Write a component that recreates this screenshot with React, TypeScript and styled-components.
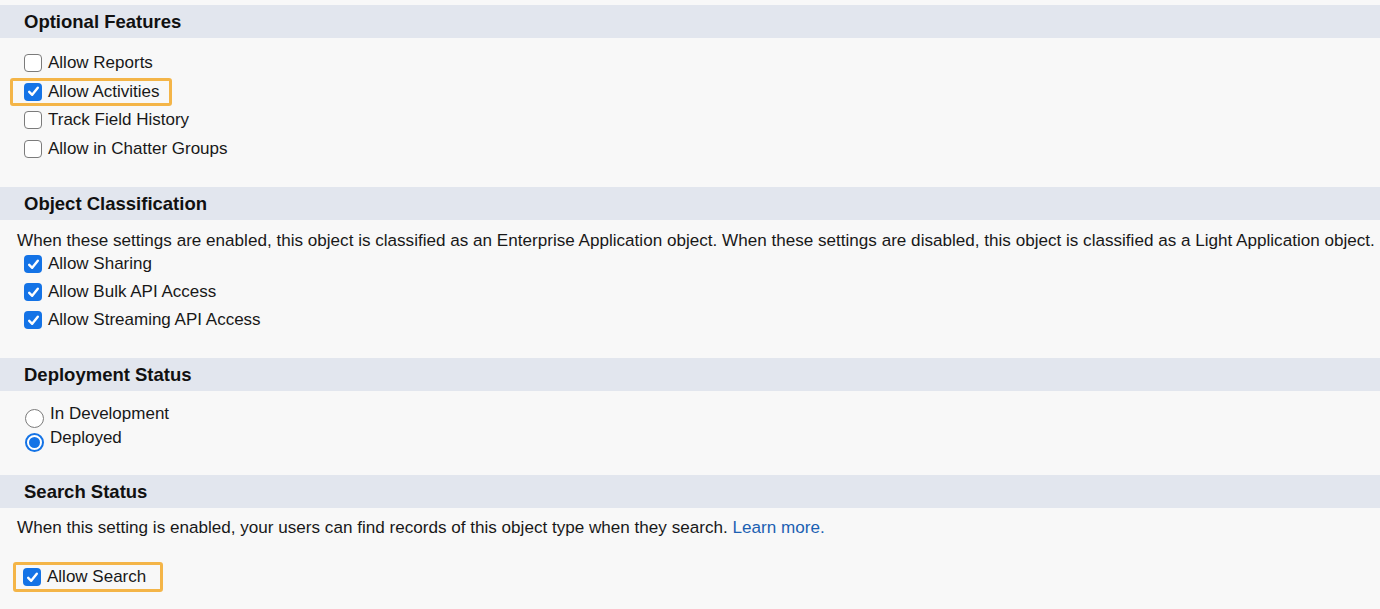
import React from 'react';
import styled, { createGlobalStyle } from 'styled-components';

const GlobalStyle = createGlobalStyle`
  html, body {
    margin: 0;
    padding: 0;
    background: #f8f8f8;
  }
  body {
    font-family: 'Liberation Sans', Arial, sans-serif;
    color: #181818;
  }
`;

const Page = styled.div`
  width: 1380px;
  height: 609px;
  overflow: hidden;
  padding-top: 5px;
  box-sizing: border-box;
  background: #f8f8f8;
`;

const SectionHeader = styled.div`
  height: 33px;
  display: flex;
  align-items: center;
  padding-left: 24px;
  background: #e2e6ee;
  font-size: 18.5px;
  font-weight: 700;
  color: #111;
`;

const SectionBody = styled.div<{ $top: number; $bottom: number; $left?: number }>`
  display: flex;
  flex-direction: column;
  align-items: flex-start;
  padding: ${p => p.$top}px 0 ${p => p.$bottom}px ${p => p.$left ?? 24}px;
`;

const Description = styled.div<{ $offset?: number }>`
  font-size: 17.1px;
  line-height: 18px;
  white-space: nowrap;
  margin-left: ${p => p.$offset ?? -7}px;
`;

const Link = styled.a`
  color: #1b60b2;
  text-decoration: none;
`;

const Row = styled.label<{ $height?: number }>`
  display: flex;
  align-items: center;
  gap: 6px;
  height: ${p => p.$height ?? 28.5}px;
  font-size: 17px;
  cursor: pointer;
`;

const Highlight = styled.div<{ $shift: number; $height: number; $right: number }>`
  display: inline-flex;
  align-items: center;
  box-sizing: border-box;
  height: ${p => p.$height}px;
  margin-left: -${p => p.$shift}px;
  padding: 0 ${p => p.$right}px 0 ${p => p.$shift - 3}px;
  border: 3px solid #f4b548;
  border-radius: 3px;
`;

const Box = styled.span<{ $checked: boolean }>`
  width: 18px;
  height: 18px;
  box-sizing: border-box;
  border-radius: 4px;
  display: inline-flex;
  align-items: center;
  justify-content: center;
  background: ${p => (p.$checked ? '#1473e6' : '#fff')};
  border: ${p => (p.$checked ? 'none' : '1.5px solid #7b7b7b')};
  flex-shrink: 0;
`;

const RadioCircle = styled.span<{ $checked: boolean }>`
  width: 19px;
  height: 19px;
  box-sizing: border-box;
  border-radius: 50%;
  flex-shrink: 0;
  margin-top: 9px;
  background: #fff;
  border: ${p => (p.$checked ? '2px solid #1473e6' : '1.5px solid #7b7b7b')};
  display: inline-flex;
  align-items: center;
  justify-content: center;

  &::after {
    content: '';
    width: 11px;
    height: 11px;
    border-radius: 50%;
    background: ${p => (p.$checked ? '#1473e6' : 'transparent')};
  }
`;

const Checkbox: React.FC<{ checked?: boolean; label: string }> = ({ checked = false, label }) => (
  <>
    <Box $checked={checked}>
      {checked && (
        <svg width="13" height="13" viewBox="0 0 13 13">
          <path d="M2.2 6.8 L5.2 9.8 L10.8 2.8" fill="none" stroke="#fff" strokeWidth="2.4" strokeLinecap="round" strokeLinejoin="round" />
        </svg>
      )}
    </Box>
    <span>{label}</span>
  </>
);

const Radio: React.FC<{ checked?: boolean; label: string }> = ({ checked = false, label }) => (
  <Row $height={24}>
    <RadioCircle $checked={checked} />
    <span>{label}</span>
  </Row>
);

const App: React.FC = () => {
  return (
    <Page>
      <GlobalStyle />

      <SectionHeader>Optional Features</SectionHeader>
      <SectionBody $top={11} $bottom={24}>
        <Row><Checkbox label="Allow Reports" /></Row>
        <Row as="div">
          <Highlight $shift={14} $height={28} $right={10}>
            <Row><Checkbox checked label="Allow Activities" /></Row>
          </Highlight>
        </Row>
        <Row><Checkbox label="Track Field History" /></Row>
        <Row><Checkbox label="Allow in Chatter Groups" /></Row>
      </SectionBody>

      <SectionHeader>Object Classification</SectionHeader>
      <SectionBody $top={12} $bottom={24}>
        <Description>
          When these settings are enabled, this object is classified as an Enterprise Application object. When these settings are disabled, this object is classified as a Light Application object.
        </Description>
        <Row $height={28}><Checkbox checked label="Allow Sharing" /></Row>
        <Row $height={28}><Checkbox checked label="Allow Bulk API Access" /></Row>
        <Row $height={28}><Checkbox checked label="Allow Streaming API Access" /></Row>
      </SectionBody>

      <SectionHeader>Deployment Status</SectionHeader>
      <SectionBody $top={11} $bottom={25} $left={25}>
        <Radio label="In Development" />
        <Radio checked label="Deployed" />
      </SectionBody>

      <SectionHeader>Search Status</SectionHeader>
      <SectionBody $top={11} $bottom={17} $left={23}>
        <Description $offset={-6}>
          When this setting is enabled, your users can find records of this object type when they search.{' '}
          <Link href="#">Learn more.</Link>
        </Description>
        <Row as="div" $height={30} style={{ marginTop: 25 }}>
          <Highlight $shift={10} $height={30} $right={14}>
            <Row><Checkbox checked label="Allow Search" /></Row>
          </Highlight>
        </Row>
      </SectionBody>
    </Page>
  );
};

export default App;
